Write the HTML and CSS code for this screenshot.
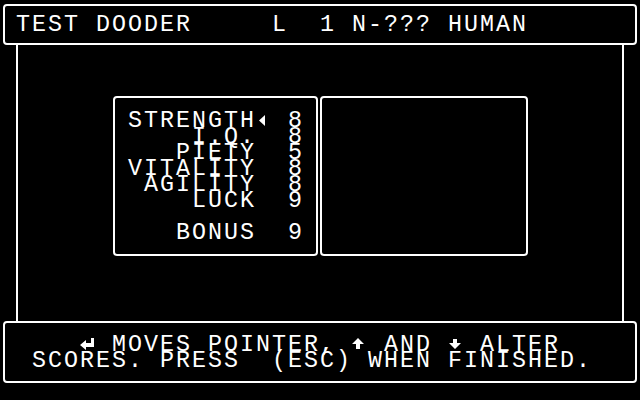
FILE: index.html
```
<!DOCTYPE html>
<html>
<head>
<meta charset="utf-8">
<link rel="stylesheet" href="styles.css">
</head>
<body>
<div class="screen">
  <header class="box top-bar">
    <div class="line">TEST DOODER     L  1 N-??? HUMAN</div>
  </header>
  <main class="middle">
    <div class="panels">
      <section class="box stats">
        <div class="line">STRENGTH<span class="icon"><svg viewBox="0 0 16 16" width="16" height="16"><polygon points="9,2 9,13 3,7.5" fill="#fff"/></svg></span> 8</div>
        <div class="line">    I.Q.  8</div>
        <div class="line">   PIETY  5</div>
        <div class="line">VITALITY  8</div>
        <div class="line"> AGILITY  8</div>
        <div class="line">    LUCK  9</div>
        <div class="line"> </div>
        <div class="line">   BONUS  9</div>
      </section>
      <section class="box blank"></section>
    </div>
  </main>
  <footer class="box help">
    <div class="line">    <span class="icon"><svg viewBox="0 0 16 16" width="16" height="16"><polygon points="0,8 6,3 6,6 11,6 11,1 14,1 14,10 6,10 6,13" fill="#fff"/></svg></span> MOVES POINTER, <span class="icon"><svg viewBox="0 0 16 16" width="16" height="16"><polygon points="6,1 12,7 8,7 8,12 4,12 4,7 0,7" fill="#fff"/></svg></span> AND <span class="icon"><svg viewBox="0 0 16 16" width="16" height="16"><polygon points="5,2 9,2 9,6 13,6 7,12 1,6 5,6" fill="#fff"/></svg></span> ALTER</div>
    <div class="line"> SCORES. PRESS  (ESC) WHEN FINISHED.</div>
  </footer>
</div>
</body>
</html>
```
FILE: styles.css
```
html, body {
  margin: 0;
  padding: 0;
  background: #000;
}
.screen {
  width: 640px;
  height: 400px;
  box-sizing: border-box;
  padding: 4px 3px 0;
  background: #000;
  color: #fff;
  font-family: "Liberation Mono", monospace;
  font-size: 23.33px;
  letter-spacing: 2px;
  line-height: 16px;
}
.line {
  white-space: pre;
  height: 16px;
}
.icon {
  display: inline-block;
  width: 16px;
  height: 16px;
  vertical-align: top;
  letter-spacing: 0;
}
.icon svg {
  display: block;
}
.box {
  border: 2px solid #fff;
  border-radius: 4px;
  box-sizing: border-box;
}
.top-bar {
  height: 41px;
  padding: 11px 0 0 11px;
}
.middle {
  height: 276px;
  margin: 0 13px;
  border-left: 2px solid #fff;
  border-right: 2px solid #fff;
  box-sizing: border-box;
  padding: 51px 0 0 95px;
}
.panels {
  display: flex;
  gap: 2px;
}
.stats {
  width: 205px;
  height: 160px;
  padding: 15px 0 0 13px;
}
.blank {
  width: 208px;
  height: 160px;
}
.help {
  height: 62px;
  padding: 14px 0 0 11px;
}
```
